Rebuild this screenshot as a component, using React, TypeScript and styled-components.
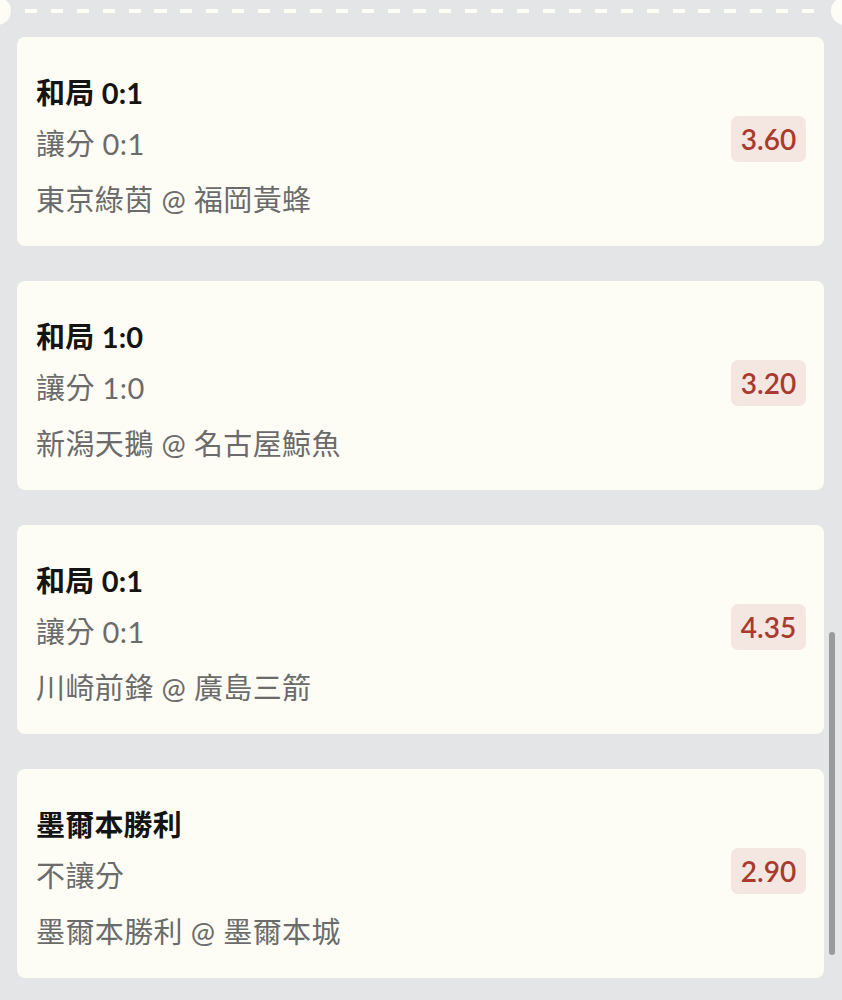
import React from "react";
import styled, { createGlobalStyle } from "styled-components";

const Global = createGlobalStyle`
  html, body { margin: 0; padding: 0; background: #e4e5e6; }
  body { font-family: "Lato", "Noto Sans CJK TC", sans-serif; }
`;

const Page = styled.div`
  position: relative;
  width: 842px;
  height: 1000px;
  overflow: hidden;
  background: #e4e5e6;
`;

const Strip = styled.div`
  position: relative;
  height: 25px;
  padding: 9px 25px 0 25px;
  box-sizing: border-box;
`;

const DashLine = styled.div`
  height: 4px;
  background: repeating-linear-gradient(
    to right,
    #fdfdf6 0 12px,
    transparent 12px 25.9px
  );
`;

const Notch = styled.div<{ $side: "left" | "right" }>`
  position: absolute;
  top: -3px;
  ${(p) => (p.$side === "left" ? "left: -17px;" : "right: -17px;")}
  width: 28px;
  height: 28px;
  border-radius: 50%;
  background: #fdfdf6;
`;

const List = styled.div`
  display: flex;
  flex-direction: column;
  gap: 35px;
  padding: 12px 18px 0 17px;
`;

const Card = styled.div`
  height: 209px;
  box-sizing: border-box;
  background: #fdfdf6;
  border-radius: 8px;
  display: flex;
  align-items: center;
  justify-content: space-between;
  padding: 0 18px 0 19px;
`;

const Info = styled.div`
  display: flex;
  flex-direction: column;
  padding-top: 10px;
`;

const Title = styled.div`
  font-size: 29px;
  line-height: 40px;
  font-weight: 700;
  color: #141414;
  margin-bottom: 11px;
  letter-spacing: 0.2px;
`;

const Sub = styled.div<{ $gap?: number }>`
  font-size: 29px;
  line-height: 40px;
  font-weight: 400;
  color: #6b6b6b;
  margin-bottom: ${(p) => p.$gap ?? 0}px;
  letter-spacing: 0.4px;
`;

const Odds = styled.div`
  height: 46px;
  min-width: 75px;
  box-sizing: border-box;
  padding: 0 9px;
  border-radius: 7px;
  background: #f4e6e0;
  color: #a83a2e;
  font-size: 28px;
  font-weight: 600;
  display: flex;
  align-items: center;
  justify-content: center;
  margin-top: -5px;
`;

const Scrollbar = styled.div`
  position: absolute;
  left: 829px;
  top: 632px;
  width: 6px;
  height: 323px;
  border-radius: 3px;
  background: #9a9b9c;
`;

const bets = [
  { title: "和局 0:1", type: "讓分 0:1", match: "東京綠茵 @ 福岡黃蜂", odds: "3.60" },
  { title: "和局 1:0", type: "讓分 1:0", match: "新潟天鵝 @ 名古屋鯨魚", odds: "3.20" },
  { title: "和局 0:1", type: "讓分 0:1", match: "川崎前鋒 @ 廣島三箭", odds: "4.35" },
  { title: "墨爾本勝利", type: "不讓分", match: "墨爾本勝利 @ 墨爾本城", odds: "2.90" },
];

export default function App() {
  return (
    <Page>
      <Global />
      <Strip>
        <Notch $side="left" />
        <DashLine />
        <Notch $side="right" />
      </Strip>
      <List>
        {bets.map((b, i) => (
          <Card key={i}>
            <Info>
              <Title>{b.title}</Title>
              <Sub $gap={16}>{b.type}</Sub>
              <Sub>{b.match}</Sub>
            </Info>
            <Odds>{b.odds}</Odds>
          </Card>
        ))}
      </List>
      <Scrollbar />
    </Page>
  );
}
